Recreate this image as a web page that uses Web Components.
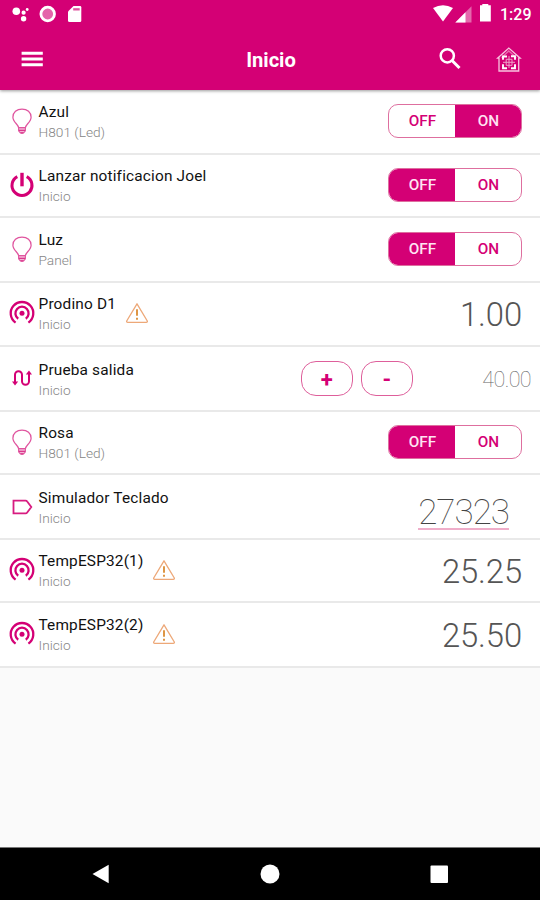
<!DOCTYPE html>
<html lang="es">
<head>
<meta charset="utf-8">
<title>Inicio</title>
<style>
  html, body { margin: 0; height: 100%; }
  body { font-family: Roboto, sans-serif; background: #fafafa; color: #111; --brand: #d40075; overflow: hidden; }
</style>
</head>
<body>
<home-app></home-app>
<script>
const ICONS = {
  bulb: `<path d="M8.600 20c0-2.900-5.700-5.700-5.700-10.500C2.900 4.700 6.700 1.300 12 1.300s9.100 3.400 9.100 8.200c0 4.800-5.700 7.600-5.700 10.500z" transform="translate(0 -.3)" fill="none" stroke="#e0559f" stroke-width="1.250"/><path d="M8.600 19.600h6.800v3.200l-1.600 2h-3.600l-1.600-2z" fill="#f3b5d5" stroke="#e0559f" stroke-width="1.100"/><path d="M9 22.400h6M10.500 25h3" stroke="#da3a8e" stroke-width="1.300"/>`,
  power: `<path d="M12 .8v13.500" stroke="#d40075" stroke-width="3.400"/><path d="M7.300 4.600A10 10 0 1 0 16.700 4.600" fill="none" stroke="#d40075" stroke-width="3"/>`,
  sensor: `<g fill="none" stroke="#d40075" stroke-width="2.300"><path d="M5.600 22.600A11.300 11.300 0 1 1 18.400 22.600"/><path d="M8.200 18.700A6.600 6.600 0 1 1 15.800 18.700" /></g><circle cx="12" cy="13.200" r="2.500" fill="#d40075"/>`,
  route: `<path d="M5 17.500V9.500a3.500 3.500 0 0 1 7 0v6.400a3.500 3.500 0 0 0 7 0V8" transform="translate(0 -.7)" fill="none" stroke="#d40075" stroke-width="2"/><path d="M2 15.600h6.200L5 19.600zM15.800 8.600H22L19 4.600z" fill="#d40075"/>`,
  label: `<path d="M3.500 6.600H15.600Q16.600 6.600 17.200 7.500L21.300 13 17.200 18.500Q16.600 19.400 15.600 19.400H3.500z" fill="none" stroke="#d81b80" stroke-width="1.800"/>`
};
function define(name, html) {
  const t = document.createElement('template');
  t.innerHTML = html;
  customElements.define(name, class extends HTMLElement {
    constructor() {
      super();
      this.attachShadow({ mode: 'open' }).append(t.content.cloneNode(true));
    }
  });
}

customElements.define('device-icon', class extends HTMLElement {
  connectedCallback() {
    if (!this.shadowRoot) this.attachShadow({ mode: 'open' });
    this.shadowRoot.innerHTML = `<style>:host{display:block;width:24px;height:26px}svg{display:block;overflow:visible}</style>
      <svg width="24" height="26" viewBox="0 0 24 26">${ICONS[this.getAttribute('name')]}</svg>`;
  }
});

define('warning-icon', `<style>:host{display:block;width:24px;height:22px}svg{display:block}</style>
  <svg width="24" height="22" viewBox="0 0 24 22"><path d="M12 1.800 22.300 19q.4 1.300-1 1.300H2.700q-1.400 0-1-1.300z" fill="none" stroke="#eda878" stroke-width="1.300" stroke-linejoin="round"/><path d="M12 7.300v6.500M12 15.800v2" stroke="#dd913c" stroke-width="1.900"/></svg>`);

define('status-bar', `<style>
  :host{display:flex;height:28px;align-items:center;justify-content:space-between;padding:0 8.500px 0 12px;color:#fff;font:500 16px/28px Roboto,sans-serif}
  svg{display:block} .r{display:flex;align-items:center;gap:8px} span{padding-top:1px}
  </style>
  <svg width="72" height="28" viewBox="0 0 72 28"><g fill="#fff"><circle cx="4.300" cy="11.300" r="3.800"/><circle cx="11.600" cy="12.700" r="2.100"/><circle cx="15.200" cy="9.500" r="1.400"/><circle cx="11.600" cy="18.700" r="2.700"/><path d="M61.500 6H68q1.300 0 1.300 1.300v13.200q0 1.500-1.300 1.500H57.500Q56 22 56 20.500V11.500z"/></g><circle cx="35.700" cy="14" r="6.800" fill="#e465aa" stroke="#fff" stroke-width="2.800"/><path d="M61.200 8.200h6.500v2.300h-6.500z" fill="#de529d"/></svg>
  <div class="r"><svg width="60" height="28" viewBox="0 0 60 28"><path d="M1 8Q11 2.500 21 8L11 21.500z" fill="#fff"/><path d="M39.500 6.200V22.500H23.300z" fill="#e468ac"/><path d="M33.500 12.200V22.500H23.300z" fill="#fff"/><path d="M48 5.200h2.300V4h6v1.200h2.500v16.300H48z" fill="#fff"/></svg><span>1:29</span></div>`);

define('app-bar', `<style>
  :host{display:grid;grid-template-columns:1fr auto 1fr;align-items:center;height:62px;padding:0 18px 0 20px;color:#fff}
  b{font:700 20.200px/26px Roboto,sans-serif;letter-spacing:-.05px;padding-top:2px}
  svg{display:block}.a{display:flex;justify-content:flex-end;align-items:center;gap:34px}
  </style>
  <svg width="24" height="24" viewBox="0 0 24 24"><path d="M1.600 6.300h21.200M1.600 12h21.200M1.600 17.700h21.200" stroke="#fff" stroke-width="3"/></svg>
  <b><slot></slot></b>
  <div class="a">
    <svg width="24" height="28" viewBox="0 0 24 28"><circle cx="9.300" cy="10.800" r="6.600" fill="none" stroke="#fff" stroke-width="2.500"/><path d="M14 15.500 21.500 23" stroke="#fff" stroke-width="3"/></svg>
    <svg width="26" height="28" viewBox="0 0 26 28"><g fill="none" stroke="#f7c3df" stroke-width="1.300"><path d="M1.500 13.200 12.800 3 24.200 13.200H22.700V26H3V13.200z"/><path d="M5.500 12.800 12.800 6 20.200 12.800" opacity=".55"/></g><path d="M7 14.800v-3.300h4M15 11.300h4v3.500M19 19.300v4h-4M11 23.300H7v-4" fill="none" stroke="#fff" stroke-width="1.900"/><path d="M13 11v12M7 17.300h12M10.200 14.300h5.800v6h-5.800z" fill="none" stroke="#eda0c9" stroke-width="1"/></svg>
  </div>`);

define('list-row', `<style>
  :host{display:flow-root;box-sizing:border-box;background:#fff;border-bottom:2px solid #e9e9e9;height:var(--h,65px)}
  .row{margin-top:var(--shift,0px);height:62px;display:flex;align-items:center;padding:0 18px 0 9.500px}
  .text{margin-left:5px;padding-top:2px}
  .title{font-size:15.400px;line-height:20px;letter-spacing:.17px;white-space:nowrap;color:#111}
  .sub{font-size:13.700px;line-height:20px;color:#868686;font-weight:300;white-space:nowrap;margin-top:-.5px}
  .warn{margin:-1px 0 0 9px} .end{margin-left:auto;display:flex;align-items:center}
  </style>
  <div class="row"><slot name="icon"></slot>
    <div class="text"><div class="title"><slot name="title"></slot></div><div class="sub"><slot name="sub"></slot></div></div>
    <div class="warn"><slot name="warn"></slot></div>
    <div class="end"><slot></slot></div>
  </div>`);

define('on-off', `<style>
  :host{display:grid;grid-template-columns:1fr 1fr;width:134px;height:34px;box-sizing:border-box;border:1px solid #de6f9f;border-radius:10px;overflow:hidden;font:500 15.300px/33px Roboto,sans-serif;text-align:center;color:var(--brand)}
  :host([value=off]) .off,:host([value=on]) .on{background:var(--brand);color:#ffe3f2}
  span{padding-left:1px}
  </style><span class="off">OFF</span><span class="on">ON</span>`);

define('step-button', `<style>
  :host{display:block;box-sizing:border-box;width:51.500px;height:35px;border:1px solid #de5f9b;border-radius:15px;text-align:center;color:var(--brand);font:700 22px/35px Roboto,sans-serif;margin-right:8.500px;margin-top:-1px}
  </style><slot></slot>`);

define('value-text', `<style>
  :host{display:block;font-size:32.800px;line-height:40px;font-weight:300;color:#555;padding-top:4px;letter-spacing:-.1px}
  :host([kind=level]){font-size:21.500px;font-weight:100;color:#666;width:110px;margin-right:-9px;text-align:right;padding-top:2px;letter-spacing:-.6px}
  :host([kind=input]){font-size:35px;font-weight:100;color:#444;line-height:34px;margin-right:13px;padding-top:9px;letter-spacing:-1px}
  :host([kind=input]) div{box-shadow:0 1px #efadc9, inset 0 -1px #efadc9;height:34px;line-height:36px}
  </style><div><slot></slot></div>`);

define('nav-bar', `<style>
  :host{display:flex;height:52px;align-items:center;justify-content:space-around;background:#000;border-top:1px solid #777;padding:0 17px}
  svg{display:block}</style>
  <svg width="20" height="20" viewBox="0 0 20 20"><path d="M1.500 10 17.700.8v18.400z" fill="#fff"/></svg>
  <svg width="20" height="20" viewBox="0 0 20 20"><circle cx="10" cy="10" r="9.500" fill="#fff"/></svg>
  <svg width="20" height="20" viewBox="0 0 20 20"><rect x="1.500" y="1.500" width="17.500" height="17.500" rx="1" fill="#fff"/></svg>`);

const toggle = v => `<on-off value="${v}"></on-off>`;
const rows = [
  ['bulb', 'Azul', 'H801 (Led)', 65, 0, toggle('on')],
  ['power', 'Lanzar notificacion Joel', 'Inicio', 63, -1, toggle('off')],
  ['bulb', 'Luz', 'Panel', 65, 0, toggle('off')],
  ['sensor', 'Prodino D1', 'Inicio', 64, -1, '<value-text>1.00</value-text>', true],
  ['route', 'Prueba salida', 'Inicio', 65, 1, '<step-button>+</step-button><step-button>-</step-button><value-text kind="level">40.00</value-text>'],
  ['bulb', 'Rosa', 'H801 (Led)', 63, -1, toggle('off')],
  ['label', 'Simulador Teclado', 'Inicio', 65, 1, '<value-text kind="input">27323</value-text>'],
  ['sensor', 'TempESP32(1)', 'Inicio', 63, -1, '<value-text>25.25</value-text>', true],
  ['sensor', 'TempESP32(2)', 'Inicio', 65, 0, '<value-text>25.50</value-text>', true]
].map(([icon, title, sub, h, shift, end, warn]) => `
  <list-row style="--h:${h}px;--shift:${shift}px">
    <device-icon slot="icon" name="${icon}"></device-icon><span slot="title">${title}</span><span slot="sub">${sub}</span>
    ${warn ? '<warning-icon slot="warn"></warning-icon>' : ''}${end}</list-row>`).join('');

define('home-app', `<style>
  :host{display:flex;flex-direction:column;height:900px;width:540px;background:#fafafa}
  header{background:var(--brand);height:90px;box-shadow:0 1px 3px rgba(0,0,0,.4);position:relative;z-index:1}
  main{flex:1}
  </style>
  <header><status-bar></status-bar><app-bar>Inicio</app-bar></header>
  <main>${rows}</main>
  <nav-bar></nav-bar>`);
</script>
</body>
</html>
